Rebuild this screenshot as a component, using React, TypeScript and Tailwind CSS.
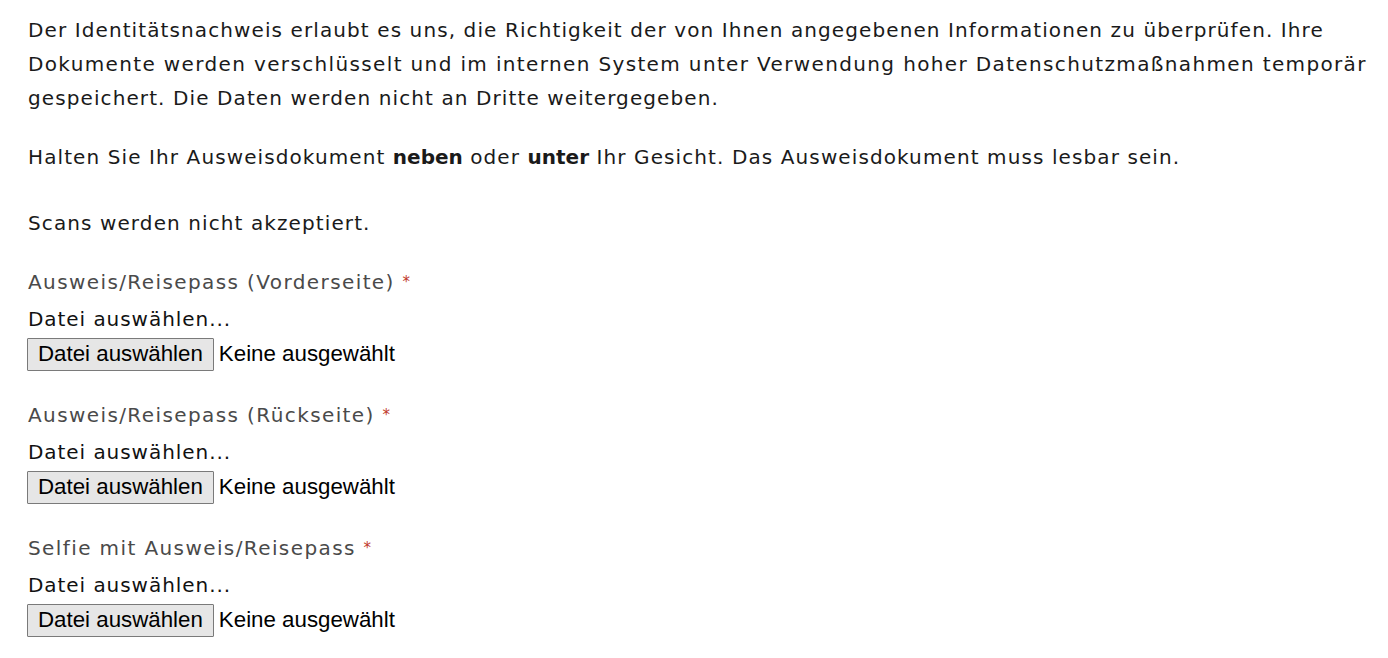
import React from "react";

function FileField({ label, last }: { label: string; last?: boolean }) {
  return (
    <div className={last ? "" : "mb-[27px]"}>
      <div className="h-[34px] leading-[34px] text-[20px] tracking-[1.4px] text-[#4a4a4a] whitespace-nowrap">
        {label} <span className="text-[#c0392b] text-[15px] align-top">*</span>
      </div>
      <div className="mt-[3px] h-[34px] leading-[34px] text-[20px] tracking-[0.95px] text-[#111] whitespace-nowrap">
        Datei auswählen...
      </div>
      <div className="mt-[2px] flex items-center font-['Liberation_Sans',Arial,sans-serif] text-[22.3px] tracking-normal text-black">
        <div className="h-[33px] ml-[-1px] px-[10px] flex items-center border border-[#7a7a7a] bg-[#e6e6e6] rounded-[1px] leading-none">
          Datei auswählen
        </div>
        <span className="ml-[5px] leading-none">Keine ausgewählt</span>
      </div>
    </div>
  );
}

export default function App() {
  return (
    <div className="min-h-[658px] w-[1388px] bg-white font-['DejaVu_Sans','Noto_Sans',sans-serif] tracking-[1.1px] text-[#1a1a1a] pl-[28px] pt-[13px]">
      <div className="text-[20px] leading-[34px] whitespace-nowrap">
        Der Identitätsnachweis erlaubt es uns, die Richtigkeit der von Ihnen angegebenen Informationen zu überprüfen. Ihre
        <br />
        <span className="tracking-[1.36px]">
          Dokumente werden verschlüsselt und im internen System unter Verwendung hoher Datenschutzmaßnahmen temporär
        </span>
        <br />
        gespeichert. Die Daten werden nicht an Dritte weitergegeben.
      </div>
      <div className="mt-[25px] text-[20px] leading-[34px] whitespace-nowrap">
        Halten Sie Ihr Ausweisdokument <span className="font-semibold tracking-[0px]">neben</span> oder{" "}
        <span className="font-semibold tracking-[0px]">unter</span> Ihr Gesicht. Das Ausweisdokument muss lesbar sein.
      </div>
      <div className="mt-[32px] text-[20px] leading-[34px] whitespace-nowrap">Scans werden nicht akzeptiert.</div>
      <div className="mt-[25px]">
        <FileField label="Ausweis/Reisepass (Vorderseite)" />
        <FileField label="Ausweis/Reisepass (Rückseite)" />
        <FileField label="Selfie mit Ausweis/Reisepass" last />
      </div>
    </div>
  );
}
